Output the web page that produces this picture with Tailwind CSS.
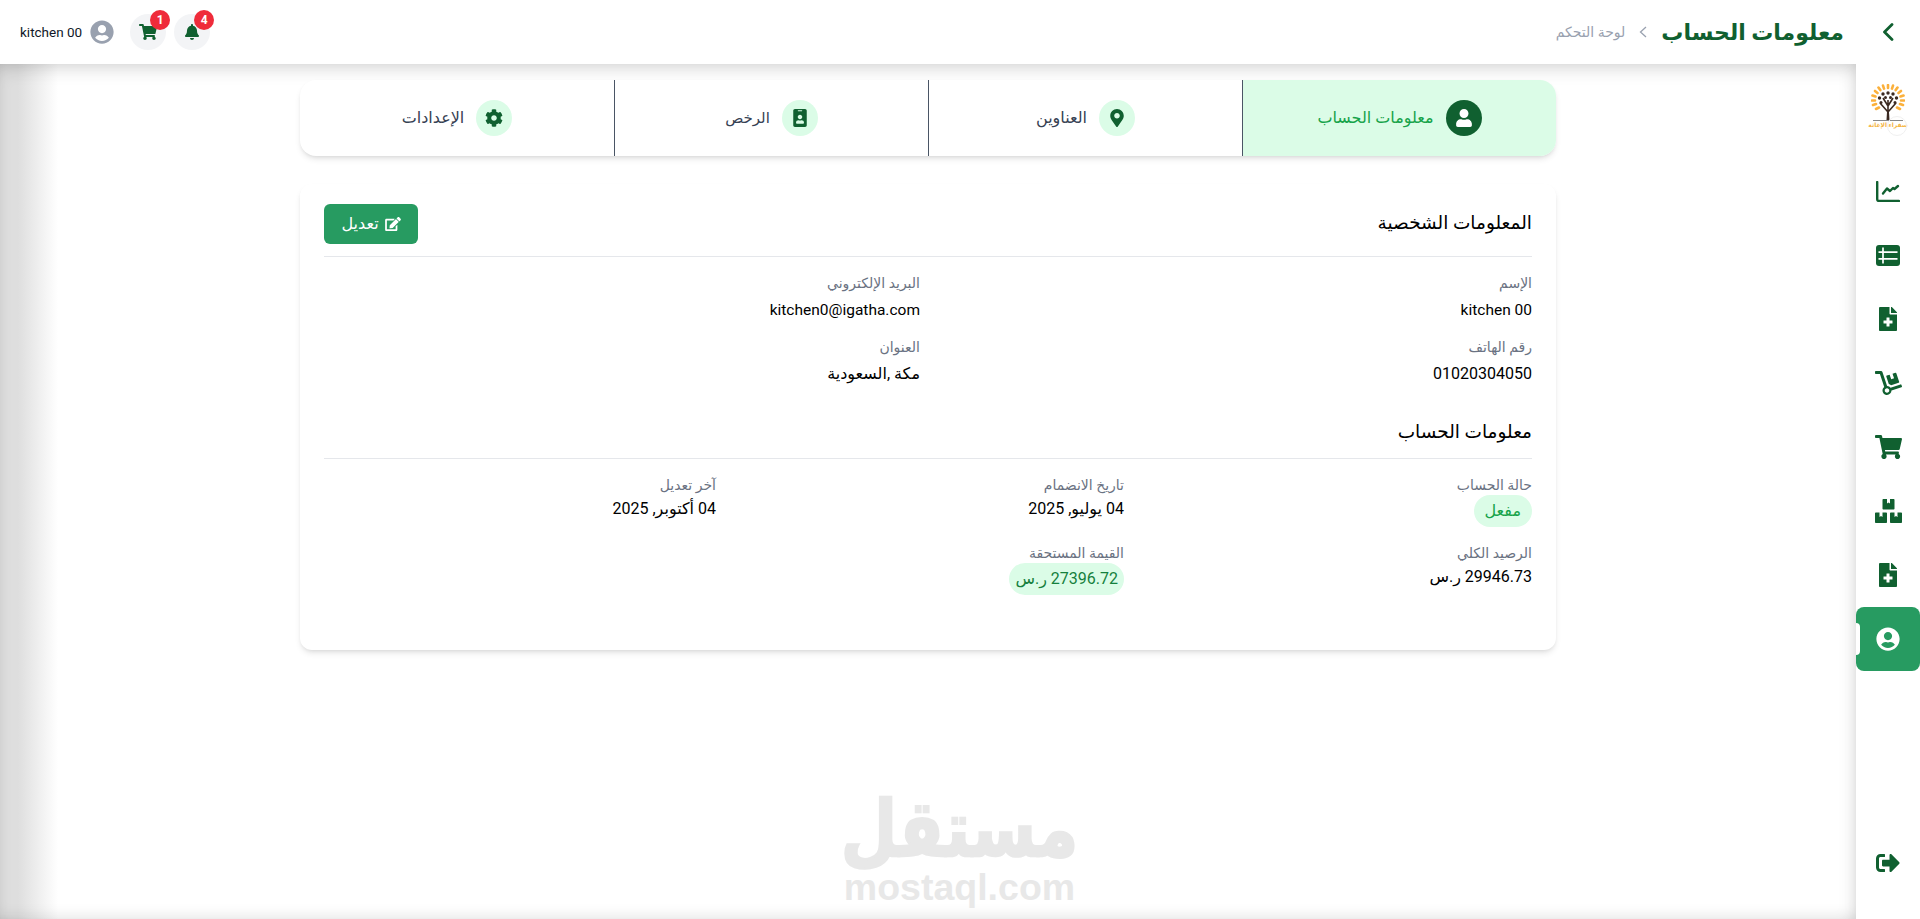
<!DOCTYPE html>
<html lang="ar" dir="rtl">
<head>
<meta charset="utf-8">
<title>معلومات الحساب</title>
<script src="https://cdn.jsdelivr.net/npm/@tailwindcss/browser@4"></script>
</head>
<body class="bg-white font-['Roboto','DejaVu_Sans',sans-serif] text-black">
<div class="flex h-[919px] w-[1920px] overflow-hidden">
  <!-- Sidebar -->
  <aside class="flex w-16 shrink-0 flex-col items-center bg-white text-[#106030]">
    <div class="flex h-16 w-full items-center justify-center">
      <svg class="h-[18px] w-[12px]" viewBox="0 0 12 18" fill="none" stroke="currentColor" stroke-width="2.800" stroke-linecap="round" stroke-linejoin="round"><path d="M10 1.500 2.500 9l7.500 7.500"/></svg>
    </div>
    <div class="relative mt-5 mb-[29px] h-[46px] w-[34px]">
      <svg class="h-[46px] w-[34px]" viewBox="0 0 34 46">
        <g stroke="#fbb03b" stroke-width="2.600" stroke-linecap="round">
          <path d="M17 1v3M12 1.600l1 3M22 1.600l-1 3M7.500 3.500l1.800 2.600M26.500 3.500l-1.800 2.600M4 7l2.500 2M30 7l-2.500 2M1.500 11.500l3 1M32.500 11.500l-3 1M1 16.500h3M33 16.500h-3M2 21l3-1M32 21l-3-1M5 25l3-1.500M29 25l-3-1.500"/>
        </g>
        <g fill="none" stroke="#3b2a22" stroke-width="1.600">
          <path d="M17 35V16M17 28 9 19M17 28l8-9M17 22l-5-8M17 22l5-8"/>
        </g>
        <path d="M15.500 36h3l-.6-9h-1.800z" fill="#3b2a22"/>
        <g fill="#3b2a22">
          <circle cx="17" cy="9" r="1.700"/><circle cx="12" cy="10" r="1.700"/><circle cx="22" cy="10" r="1.700"/><circle cx="8.500" cy="14" r="1.700"/><circle cx="25.500" cy="14" r="1.700"/><circle cx="14.500" cy="13.500" r="1.500"/><circle cx="19.500" cy="13.500" r="1.500"/><circle cx="10" cy="18.500" r="1.500"/><circle cx="24" cy="18.500" r="1.500"/>
        </g>
        <path d="M2 36.500h30" stroke="#555" stroke-width=".7"/>
      </svg>
      <span class="absolute inset-x-[-4px] top-[36px] text-center text-[6px] leading-[9px] font-bold whitespace-nowrap text-[#f5b544]">سفراء الإغاثة</span>
      <span class="absolute top-[32px] left-[16px] h-[20px] w-[20px] rounded-full border border-[#f0f0f0]"></span>
    </div>
    <nav class="flex w-full flex-col">
      <a class="flex h-16 items-center justify-center">
        <svg class="h-[21px] w-6" viewBox="0 0 24 21" fill="none" stroke="currentColor" stroke-width="2.400" stroke-linecap="round" stroke-linejoin="round"><path d="M1.200 1v17.200q0 1.800 1.800 1.800h20"/><path d="M7 12.500 11 7.500l3 2.500 3-3 1.500 1L22 5"/></svg>
      </a>
      <a class="flex h-16 items-center justify-center">
        <svg class="h-[21px] w-6" viewBox="0 0 24 21"><rect width="24" height="21" rx="3" fill="currentColor"/><path d="M2.500 7.200h19M2.500 13.800h19M7 2.500v16" stroke="#fff" stroke-width="1.700" fill="none"/></svg>
      </a>
      <a class="flex h-16 items-center justify-center">
        <svg class="h-6 w-[18px]" viewBox="0 0 384 512" fill="currentColor"><path d="M377 105L279.100 7c-4.500-4.500-10.600-7-17-7H256v128h128v-6.100c0-6.300-2.500-12.400-7-16.900zm-153 31V0H24C10.700 0 0 10.700 0 24v464c0 13.300 10.700 24 24 24h336c13.300 0 24-10.700 24-24V160H248c-13.200 0-24-10.800-24-24zm64 160v48c0 4.400-3.600 8-8 8h-56v56c0 4.400-3.600 8-8 8h-48c-4.400 0-8-3.600-8-8v-56h-56c-4.400 0-8-3.600-8-8v-48c0-4.400 3.600-8 8-8h56v-56c0-4.400 3.600-8 8-8h48c4.400 0 8 3.600 8 8v56h56c4.400 0 8 3.600 8 8z"/></svg>
      </a>
      <a class="flex h-16 items-center justify-center">
        <svg class="h-6 w-[27px]" viewBox="0 0 576 512" fill="currentColor"><path d="M294.200 277.700c18 5 34.700 13.400 49.500 24.700l161.500-53.800c8.400-2.800 12.900-11.900 10.100-20.200L454.900 47.200c-2.800-8.400-11.900-12.900-20.200-10.100l-61.100 20.400 33.100 99.400L346 177l-33.100-99.400-61.600 20.500c-8.400 2.800-12.900 11.900-10.100 20.200l53 159.400zm281 48.700L565 296c-2.800-8.400-11.900-12.900-20.200-10.100l-213.500 71.200c-17.200-22-43.600-36.400-73.500-37L158.400 21.900C154 8.800 141.800 0 128 0H16C7.200 0 0 7.200 0 16v32c0 8.800 7.200 16 16 16h88.900l92.200 276.700c-26.100 20.400-41.700 53.600-36 90.500 6.100 39.400 37.900 72.300 77.300 79.200 60.200 10.700 112.300-34.800 113.400-92.600l213.300-71.200c8.300-2.800 12.900-11.800 10.100-20.200zM256 464c-26.500 0-48-21.500-48-48s21.500-48 48-48 48 21.500 48 48-21.500 48-48 48z"/></svg>
      </a>
      <a class="flex h-16 items-center justify-center">
        <svg class="h-6 w-[27px]" viewBox="0 0 576 512" fill="currentColor"><path d="M528.120 301.319l47.273-208C578.806 78.301 567.391 64 551.990 64H159.208l-9.166-44.810C147.758 8.021 137.930 0 126.529 0H24C10.745 0 0 10.745 0 24v16c0 13.255 10.745 24 24 24h69.883l70.248 343.435C147.325 417.100 136 435.222 136 456c0 30.928 25.072 56 56 56s56-25.072 56-56c0-15.674-6.447-29.835-16.824-40h209.647C430.447 426.165 424 440.326 424 456c0 30.928 25.072 56 56 56s56-25.072 56-56c0-22.172-12.888-41.332-31.579-50.405l5.517-24.276c3.413-15.018-8.002-29.319-23.403-29.319H218.117l-6.545-32h293.145c11.206 0 20.920-7.754 23.403-18.681z"/></svg>
      </a>
      <a class="flex h-16 items-center justify-center">
        <svg class="h-6 w-[27px]" viewBox="0 0 576 512" fill="currentColor"><path d="M560 288h-80v96l-32-21.300-32 21.300v-96h-80c-8.800 0-16 7.200-16 16v192c0 8.800 7.200 16 16 16h224c8.800 0 16-7.200 16-16V304c0-8.800-7.200-16-16-16zm-384-64h224c8.800 0 16-7.200 16-16V16c0-8.800-7.200-16-16-16h-80v96l-32-21.300L256 96V0h-80c-8.800 0-16 7.200-16 16v192c0 8.800 7.200 16 16 16zm64 64h-80v96l-32-21.300L96 384v-96H16c-8.800 0-16 7.200-16 16v192c0 8.800 7.200 16 16 16h224c8.800 0 16-7.200 16-16V304c0-8.800-7.200-16-16-16z"/></svg>
      </a>
      <a class="flex h-16 items-center justify-center">
        <svg class="h-6 w-[18px]" viewBox="0 0 384 512" fill="currentColor"><path d="M377 105L279.100 7c-4.500-4.500-10.600-7-17-7H256v128h128v-6.100c0-6.300-2.500-12.400-7-16.900zm-153 31V0H24C10.700 0 0 10.700 0 24v464c0 13.300 10.700 24 24 24h336c13.300 0 24-10.700 24-24V160H248c-13.200 0-24-10.800-24-24zm64 160v48c0 4.400-3.600 8-8 8h-56v56c0 4.400-3.600 8-8 8h-48c-4.400 0-8-3.600-8-8v-56h-56c-4.400 0-8-3.600-8-8v-48c0-4.400 3.600-8 8-8h56v-56c0-4.400 3.600-8 8-8h48c4.400 0 8 3.600 8 8v56h56c4.400 0 8 3.600 8 8z"/></svg>
      </a>
      <a class="relative flex h-16 items-center justify-center rounded-lg bg-[#279b61] text-white">
        <span class="absolute top-4 left-0 h-8 w-1 rounded-r-sm bg-white"></span>
        <svg class="h-6 w-6" viewBox="0 0 496 512" fill="currentColor"><path d="M248 8C111 8 0 119 0 256s111 248 248 248 248-111 248-248S385 8 248 8zm0 96c48.600 0 88 39.400 88 88s-39.400 88-88 88-88-39.400-88-88 39.400-88 88-88zm0 344c-58.700 0-111.300-26.600-146.500-68.200 18.800-35.400 55.600-59.800 98.500-59.800 2.400 0 4.800.4 7.100 1.100 13 4.200 26.600 6.900 40.900 6.900 14.300 0 28-2.700 40.900-6.900 2.300-.7 4.700-1.100 7.100-1.100 42.900 0 79.700 24.400 98.500 59.800C359.300 421.400 306.700 448 248 448z"/></svg>
      </a>
    </nav>
    <a class="mt-auto mb-6 flex h-16 w-full items-center justify-center">
      <svg class="h-6 w-6" viewBox="0 0 512 512" fill="currentColor"><path d="M497 273L329 441c-15 15-41 4.500-41-17v-96H152c-13.300 0-24-10.700-24-24v-96c0-13.300 10.700-24 24-24h136V88c0-21.400 25.900-32 41-17l168 168c9.300 9.400 9.300 24.600 0 34zM192 436v-40c0-6.600-5.400-12-12-12H96c-17.700 0-32-14.300-32-32V160c0-17.700 14.300-32 32-32h84c6.600 0 12-5.400 12-12V76c0-6.600-5.400-12-12-12H96c-53 0-96 43-96 96v192c0 53 43 96 96 96h84c6.600 0 12-5.400 12-12z"/></svg>
    </a>
  </aside>

  <!-- Main column -->
  <div class="flex min-w-0 flex-1 flex-col">
    <header class="flex h-16 shrink-0 items-center justify-between bg-white pr-3 pl-5">
      <div class="flex items-center gap-[14px]">
        <h1 class="text-[22px] font-bold text-[#106030]">معلومات الحساب</h1>
        <svg class="h-3 w-2 text-gray-400" viewBox="0 0 8 12" fill="none" stroke="currentColor" stroke-width="1.300"><path d="M7 1 1.500 6 7 11"/></svg>
        <span class="text-sm text-gray-400">لوحة التحكم</span>
      </div>
      <div class="flex items-center">
        <div class="relative flex h-9 w-9 items-center justify-center rounded-full bg-gray-100">
          <svg class="h-4 w-[14px] text-[#106030]" viewBox="0 0 448 512" fill="currentColor"><path d="M224 512c35.320 0 63.970-28.650 63.970-64H160.030c0 35.350 28.650 64 63.970 64zm215.390-149.710c-19.320-20.760-55.470-51.990-55.470-154.290 0-77.700-54.480-139.900-127.940-155.160V32c0-17.670-14.320-32-31.980-32s-31.980 14.330-31.980 32v20.840C118.560 68.100 64.080 130.300 64.080 208c0 102.300-36.150 133.530-55.470 154.290-6 6.450-8.660 14.160-8.610 21.710.11 16.400 12.980 32 32.100 32h383.800c19.120 0 32-15.600 32.100-32 .05-7.550-2.610-15.270-8.610-21.710z"/></svg>
          <span class="absolute -top-1 -right-1 flex h-5 w-5 items-center justify-center rounded-full bg-[#ef2b3a] text-xs font-bold text-white">4</span>
        </div>
        <div class="relative mr-2 flex h-9 w-9 items-center justify-center rounded-full bg-gray-100">
          <svg class="h-4 w-[18px] text-[#106030]" viewBox="0 0 576 512" fill="currentColor"><path d="M528.120 301.319l47.273-208C578.806 78.301 567.391 64 551.990 64H159.208l-9.166-44.810C147.758 8.021 137.930 0 126.529 0H24C10.745 0 0 10.745 0 24v16c0 13.255 10.745 24 24 24h69.883l70.248 343.435C147.325 417.100 136 435.222 136 456c0 30.928 25.072 56 56 56s56-25.072 56-56c0-15.674-6.447-29.835-16.824-40h209.647C430.447 426.165 424 440.326 424 456c0 30.928 25.072 56 56 56s56-25.072 56-56c0-22.172-12.888-41.332-31.579-50.405l5.517-24.276c3.413-15.018-8.002-29.319-23.403-29.319H218.117l-6.545-32h293.145c11.206 0 20.920-7.754 23.403-18.681z"/></svg>
          <span class="absolute -top-1 -right-1 flex h-5 w-5 items-center justify-center rounded-full bg-[#ef2b3a] text-xs font-bold text-white">1</span>
        </div>
        <svg class="mr-4 h-6 w-6 text-gray-400" viewBox="0 0 496 512" fill="currentColor"><path d="M248 8C111 8 0 119 0 256s111 248 248 248 248-111 248-248S385 8 248 8zm0 96c48.600 0 88 39.400 88 88s-39.400 88-88 88-88-39.400-88-88 39.400-88 88-88zm0 344c-58.700 0-111.300-26.600-146.500-68.200 18.800-35.400 55.600-59.800 98.500-59.800 2.400 0 4.800.4 7.100 1.100 13 4.200 26.600 6.900 40.900 6.900 14.300 0 28-2.700 40.900-6.900 2.300-.7 4.700-1.100 7.100-1.100 42.900 0 79.700 24.400 98.500 59.800C359.300 421.400 306.700 448 248 448z"/></svg>
        <span class="mr-2 text-[13.500px] text-gray-900">kitchen 00</span>
      </div>
    </header>

    <main class="relative flex-1 bg-[linear-gradient(90deg,#dedede_0,#dedede_18px,#ffffff_58px)] px-[300px] pt-4 shadow-[inset_0_10px_18px_-6px_rgba(0,0,0,0.16),inset_-10px_0_16px_-6px_rgba(0,0,0,0.08),inset_0_-10px_14px_-6px_rgba(0,0,0,0.08)]">
      <div class="mb-7 grid h-[76px] grid-cols-4 overflow-hidden rounded-2xl bg-white shadow-md">
        <div class="flex items-center justify-center gap-3 border-l border-gray-600 bg-green-100">
          <span class="flex h-9 w-9 items-center justify-center rounded-full bg-[#106030] text-white">
            <svg class="h-[18px] w-4" viewBox="0 0 448 512" fill="currentColor"><path d="M224 256c70.700 0 128-57.300 128-128S294.700 0 224 0 96 57.300 96 128s57.300 128 128 128zm89.600 32h-16.700c-22.200 10.200-46.900 16-72.900 16s-50.600-5.800-72.900-16h-16.700C60.200 288 0 348.200 0 422.400V464c0 26.500 21.500 48 48 48h352c26.500 0 48-21.500 48-48v-41.600c0-74.200-60.200-134.400-134.400-134.400z"/></svg>
          </span>
          <span class="text-base text-[#16a34a]">معلومات الحساب</span>
        </div>
        <div class="flex items-center justify-center gap-3 border-l border-gray-600">
          <span class="flex h-9 w-9 items-center justify-center rounded-full bg-green-100 text-[#106030]">
            <svg class="h-[18px] w-[14px]" viewBox="0 0 384 512" fill="currentColor"><path d="M172.268 501.670C26.970 291.031 0 269.413 0 192 0 85.961 85.961 0 192 0s192 85.961 192 192c0 77.413-26.970 99.031-172.268 309.670-9.535 13.774-29.930 13.773-39.464 0zM192 272c44.183 0 80-35.817 80-80s-35.817-80-80-80-80 35.817-80 80 35.817 80 80 80z"/></svg>
          </span>
          <span class="text-base text-gray-700">العناوين</span>
        </div>
        <div class="flex items-center justify-center gap-3 border-l border-gray-600">
          <span class="flex h-9 w-9 items-center justify-center rounded-full bg-green-100 text-[#106030]">
            <svg class="h-[18px] w-[14px]" viewBox="0 0 384 512" fill="currentColor"><path d="M336 0H48C21.500 0 0 21.500 0 48v416c0 26.500 21.500 48 48 48h288c26.500 0 48-21.500 48-48V48c0-26.500-21.500-48-48-48zM144 32h96c8.800 0 16 7.200 16 16s-7.200 16-16 16h-96c-8.800 0-16-7.200-16-16s7.200-16 16-16zm48 128c35.300 0 64 28.700 64 64s-28.700 64-64 64-64-28.700-64-64 28.700-64 64-64zm112 236.800c0 10.600-10 19.200-22.400 19.200H102.400C90 416 80 407.400 80 396.800v-19.200c0-31.800 30.100-57.600 67.200-57.600h5c12.300 5.100 25.700 8 39.800 8s27.600-2.900 39.800-8h5c37.100 0 67.200 25.800 67.200 57.600v19.200z"/></svg>
          </span>
          <span class="text-[15px] text-gray-700">الرخص</span>
        </div>
        <div class="flex items-center justify-center gap-3">
          <span class="flex h-9 w-9 items-center justify-center rounded-full bg-green-100 text-[#106030]">
            <svg class="h-[18px] w-[18px]" viewBox="0 0 512 512" fill="currentColor"><path d="M487.400 315.700l-42.600-24.600c4.300-23.200 4.300-47 0-70.200l42.600-24.600c4.900-2.800 7.100-8.600 5.500-14-11.100-35.600-30-67.800-54.700-94.600-3.800-4.100-10-5.100-14.800-2.300L380.800 110c-17.900-15.400-38.500-27.300-60.800-35.100V25.800c0-5.600-3.900-10.500-9.400-11.700-36.700-8.200-74.300-7.800-109.200 0-5.500 1.200-9.400 6.100-9.400 11.700V75c-22.200 7.900-42.800 19.800-60.800 35.100L88.700 85.500c-4.900-2.800-11-1.900-14.800 2.300-24.700 26.700-43.600 58.900-54.700 94.600-1.700 5.400.6 11.200 5.500 14L67.300 221c-4.300 23.200-4.300 47 0 70.200l-42.600 24.600c-4.900 2.800-7.100 8.600-5.500 14 11.100 35.600 30 67.800 54.700 94.600 3.800 4.100 10 5.100 14.800 2.300l42.600-24.600c17.900 15.400 38.500 27.300 60.800 35.100v49.200c0 5.600 3.900 10.500 9.400 11.700 36.700 8.200 74.300 7.800 109.200 0 5.500-1.200 9.400-6.100 9.400-11.700v-49.200c22.200-7.900 42.800-19.800 60.800-35.100l42.600 24.600c4.900 2.800 11 1.900 14.800-2.300 24.700-26.700 43.600-58.900 54.700-94.600 1.500-5.500-.7-11.300-5.600-14.100zM256 336c-44.100 0-80-35.900-80-80s35.900-80 80-80 80 35.900 80 80-35.900 80-80 80z"/></svg>
          </span>
          <span class="text-base text-gray-700">الإعدادات</span>
        </div>
      </div>

      <section class="h-[466px] rounded-xl bg-white px-6 pt-5 shadow-md">
        <div class="flex items-center justify-between border-b border-gray-200 pb-3">
          <h2 class="text-[18.500px] text-black">المعلومات الشخصية</h2>
          <button class="flex h-10 w-[94px] items-center justify-center gap-1.5 rounded-md bg-[#279b61] text-base text-white">
            <svg class="h-[14px] w-4" viewBox="0 0 576 512" fill="currentColor"><path d="M402.600 83.200l90.200 90.200c3.800 3.800 3.800 10 0 13.800L274.400 405.600l-92.800 10.300c-12.400 1.400-22.900-9.100-21.500-21.500l10.300-92.800L388.800 83.200c3.800-3.800 10-3.800 13.800 0zm162-22.900l-48.800-48.800c-15.200-15.200-39.900-15.200-55.200 0l-35.400 35.400c-3.800 3.800-3.800 10 0 13.800l90.200 90.200c3.800 3.800 10 3.800 13.800 0l35.400-35.400c15.200-15.300 15.200-40 0-55.200zM384 346.200V448H64V128h231.800c3.200 0 6.200-1.300 8.500-3.500l40-40c7.600-7.600 2.200-20.500-8.500-20.500H48C21.500 64 0 85.500 0 112v352c0 26.500 21.500 48 48 48h352c26.500 0 48-21.500 48-48V306.200c0-10.700-12.900-16-20.500-8.500l-40 40c-2.200 2.300-3.500 5.300-3.500 8.500z"/></svg>
            تعديل
          </button>
        </div>
        <div class="grid grid-cols-2 gap-x-4 gap-y-[15px] pt-4">
          <div><p class="text-sm text-gray-500">الإسم</p><p class="mt-[5px] text-[15.500px] leading-6">kitchen 00</p></div>
          <div><p class="text-sm text-gray-500">البريد الإلكتروني</p><p class="mt-[5px] text-[15.500px] leading-6">kitchen0@igatha.com</p></div>
          <div><p class="text-sm text-gray-500">رقم الهاتف</p><p class="mt-[5px] text-base leading-6">01020304050</p></div>
          <div><p class="text-sm text-gray-500">العنوان</p><p class="mt-[5px] text-base leading-6">مكة ,السعودية</p></div>
        </div>
        <h2 class="mt-8 border-b border-gray-200 pb-3 text-[18.500px] leading-7">معلومات الحساب</h2>
        <div class="grid grid-cols-3 gap-4 pt-4">
          <div><p class="text-sm text-gray-500">حالة الحساب</p><span class="inline-flex h-8 items-center rounded-full bg-green-100 px-[11px] text-base text-[#16a34a]">مفعل</span></div>
          <div><p class="text-sm text-gray-500">تاريخ الانضمام</p><p class="text-base leading-7">04 يوليو, 2025</p></div>
          <div><p class="text-sm text-gray-500">آخر تعديل</p><p class="text-base leading-7">04 أكتوبر, 2025</p></div>
          <div><p class="text-sm text-gray-500">الرصيد الكلي</p><p class="text-base leading-7">29946.73 ر.س</p></div>
          <div><p class="text-sm text-gray-500">القيمة المستحقة</p><span class="inline-flex h-8 items-center rounded-full bg-green-100 px-1.5 text-base text-[#15803d]">27396.72 ر.س</span></div>
        </div>
      </section>

      <div class="pointer-events-none absolute top-[731px] left-[845px] flex w-[229px] flex-col items-center text-[#e8e8e8]">
        <span class="origin-center scale-y-[1.2] text-[65px] leading-[70px] font-bold [-webkit-text-stroke:2px_#e8e8e8]">مستقل</span>
        <span dir="ltr" class="mt-[4px] font-['Liberation_Sans',sans-serif] text-[37.500px] leading-[36px] font-bold">mostaql.com</span>
      </div>
    </main>
  </div>
</div>
</body>
</html>
